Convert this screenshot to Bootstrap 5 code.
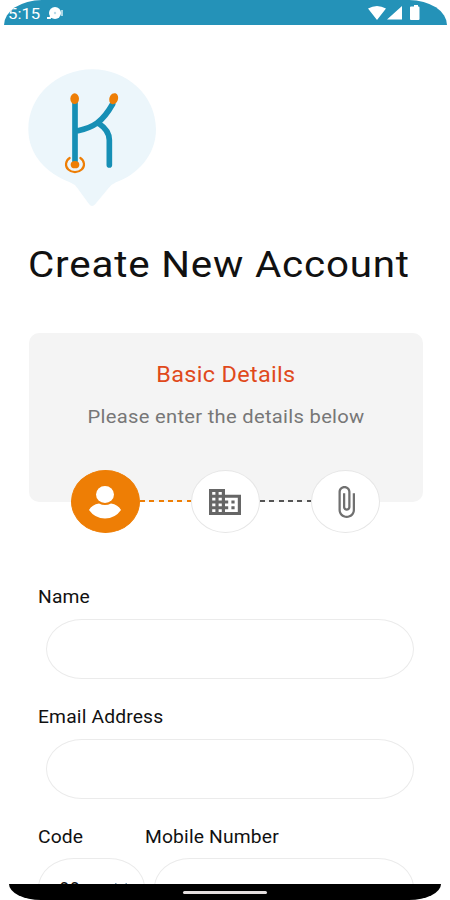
<!DOCTYPE html>
<html lang="en">
<head>
<meta charset="utf-8">
<meta name="viewport" content="width=device-width, initial-scale=1">
<title>Create New Account</title>
<link href="https://cdn.jsdelivr.net/npm/bootstrap@5.3.0/dist/css/bootstrap.min.css" rel="stylesheet">
<style>
body{font-family:Roboto,"Liberation Sans",sans-serif;color:#111;background:#fff;height:900px}
.statusbar{height:25px;margin:0 3px 0 4px;background:#2492b8;border-radius:38px 38px 0 0/25px 25px 0 0;font-size:15.5px;line-height:28px}
.clock{margin-left:4px;transform:scaleX(1.08);transform-origin:left}
.screen{height:859px;padding:35px 27px 0 20px}
.logo{width:150px;height:155px}
.wide{display:inline-block;white-space:nowrap;transform:scaleX(1.09);transform-origin:left}
.wide-center{transform-origin:center}
.title{font-size:37px;line-height:44px;margin:28px 0 0 8px;letter-spacing:.75px;font-weight:400}
.panel{height:169px;margin:46px 0 0 8.5px;background:#f4f4f4;border-radius:10px;padding-top:28px}
.panel-title{font-size:21.5px;line-height:28px;color:#e0491b;letter-spacing:.3px}
.panel-text{font-size:18.5px;line-height:24px;color:#777;margin-top:16px;letter-spacing:.27px}
.stepper{margin:-32px 43px 0 50.5px;position:relative}
.step{width:69px;height:63px;border-radius:50%;background:#fff;border:1px solid #e6e6e6;flex:none}
.step.active-step{background:#ee7e05;border-color:#ee7e05}
.dashes{height:2px;margin-top:-2px;background:repeating-linear-gradient(90deg,#555 0 5px,transparent 5px 9.3px)}
.dashes.done{background:repeating-linear-gradient(90deg,#ee7e05 0 5px,transparent 5px 9.3px)}
.fields{padding:51px 9px 0 17.5px}
.field-label{font-size:18px;line-height:26px;letter-spacing:.15px;display:block}
.field-label .wide{transform:scaleX(1.07)}
.pill{height:60px;border:1.5px solid #ebebeb;border-radius:36px/30px;background:#fff;padding:0}
.pill-inset{margin:9px 0 25px 8.5px;width:calc(100% - 8.5px)}
.code-col{width:107.5px}
.mobile-box{padding:8px 0 0 9px}
.code-text{font-size:18px;line-height:20px;letter-spacing:.4px;padding:20px 0 0 21px}
.navbar-strip{height:16px;margin:0 9px;background:#000;border-radius:0 0 34px 34px/0 0 17px 17px}
.handle{width:84px;height:3px;border-radius:2px;background:#e4dfdf;margin-top:1px}
</style>
</head>
<body class="overflow-hidden">
<header class="statusbar d-flex justify-content-between text-white overflow-hidden">
  <div class="d-flex">
    <span class="clock">5:15</span>
    <svg class="ms-2 mt-1" width="22" height="18" viewBox="0 0 22 18"><path d="M1 14h3l2-3" stroke="#fff" stroke-width="2" fill="none"/><circle cx="9" cy="9" r="6" fill="#fff"/><circle cx="9" cy="9" r="1.200" fill="#b9dbe8"/><path d="M16 6v6" stroke="#d7edf4" stroke-width="1.500"/></svg>
  </div>
  <svg width="79" height="25" viewBox="368 0 79 25" fill="#fff"><path d="M368 8.500Q377 3.500 386 8.500L377 20ZM387 19.500L402 6V19.500ZM412 6.500h2V5h4v1.500h.5q1 0 1 1v11.500q0 1-1 1H411q-1 0-1-1V7.500q0-1 1-1Z"/></svg>
</header>
<main class="screen overflow-hidden">
  <svg class="logo d-block" viewBox="0 0 450 465" fill="none">
    <path d="M217 28C322 28 408 108 408 208C408 288 350 345 288 367Q272 374 264 386L226 432Q216 444 207 432L172 384Q164 372 148 366C80 340 25 285 25 208C25 108 111 28 217 28Z" fill="#ecf6fb"/>
    <g stroke="#168fb5" stroke-width="17" stroke-linecap="round" stroke-linejoin="round"><path d="M165 128V303M278 132C247 187 219 203 174 212M236 190Q268 211 268 240V315"/></g>
    <path d="M149 294A27 23.500 0 1 0 181 294" stroke="#ee7e05" stroke-width="6.500" stroke-linecap="round"/>
    <g fill="#ee7e05"><ellipse cx="164" cy="116" rx="13" ry="16"/><ellipse cx="281" cy="116" rx="13" ry="17" transform="rotate(20 281 116)"/><ellipse cx="165" cy="314" rx="13" ry="11"/></g>
  </svg>
  <h1 class="title"><span class="wide">Create New Account</span></h1>
  <section class="panel text-center">
    <div class="panel-title"><span class="wide wide-center">Basic Details</span></div>
    <div class="panel-text"><span class="wide wide-center">Please enter the details below</span></div>
  </section>
  <div class="stepper d-flex align-items-center">
    <div class="step active-step d-flex align-items-center justify-content-center"><svg width="32" height="34" viewBox="0 0 32 34" fill="#fff"><ellipse cx="16" cy="9.500" rx="9" ry="8.500"/><path d="M0 25Q3 19.500 10 18.500Q16 21.500 22 18.500Q29 19.500 32 25Q26 33.500 16 33.500T0 25Z"/></svg></div>
    <div class="dashes done flex-grow-1"></div>
    <div class="step d-flex align-items-center justify-content-center"><svg width="32" height="26" viewBox="2 3 20 18" preserveAspectRatio="none" fill="#666"><path d="M12 7V3H2v18h20V7H12zM6 19H4v-2h2v2zm0-4H4v-2h2v2zm0-4H4V9h2v2zm0-4H4V5h2v2zm4 12H8v-2h2v2zm0-4H8v-2h2v2zm0-4H8V9h2v2zm0-4H8V5h2v2zm10 12h-8v-2h2v-2h-2v-2h2v-2h-2V9h8v10zm-2-8h-2v2h2v-2zm0 4h-2v2h2v-2z"/></svg></div>
    <div class="dashes flex-grow-1"></div>
    <div class="step d-flex align-items-center justify-content-center"><svg width="18" height="32" viewBox="6 1 12 22" preserveAspectRatio="none" fill="#707070"><path d="M16.500 6v11.500c0 2.210-1.790 4-4 4s-4-1.790-4-4V5c0-1.380 1.120-2.500 2.500-2.500s2.500 1.120 2.500 2.500v10.500c0 .55-.45 1-1 1s-1-.45-1-1V6H10v9.500c0 1.380 1.120 2.500 2.500 2.500s2.500-1.120 2.500-2.500V5c0-2.210-1.790-4-4-4S7 2.790 7 5v12.500c0 3.040 2.460 5.500 5.500 5.500s5.500-2.460 5.500-5.500V6h-1.500z"/></svg></div>
  </div>
  <form class="fields">
    <label class="field-label" for="name"><span class="wide">Name</span></label>
    <input id="name" class="form-control pill pill-inset" type="text">
    <label class="field-label" for="email"><span class="wide">Email Address</span></label>
    <input id="email" class="form-control pill pill-inset" type="email">
    <div class="d-flex">
      <div class="code-col">
        <span class="field-label"><span class="wide">Code</span></span>
        <div class="pill code-text mt-2 d-flex"><span>99</span><svg class="ms-auto me-3 mt-1" width="14" height="10" viewBox="0 0 14 10" fill="none" stroke="#1c5684" stroke-width="2.500"><path d="M1 1l6 6 6-6"/></svg></div>
      </div>
      <div class="flex-grow-1">
        <label class="field-label" for="mobile"><span class="wide">Mobile Number</span></label>
        <div class="mobile-box"><input id="mobile" class="form-control pill" type="tel"></div>
      </div>
    </div>
  </form>
</main>
<footer class="navbar-strip d-flex align-items-center justify-content-center"><div class="handle"></div></footer>
<script src="https://cdn.jsdelivr.net/npm/bootstrap@5.3.0/dist/js/bootstrap.bundle.min.js"></script>
</body>
</html>
